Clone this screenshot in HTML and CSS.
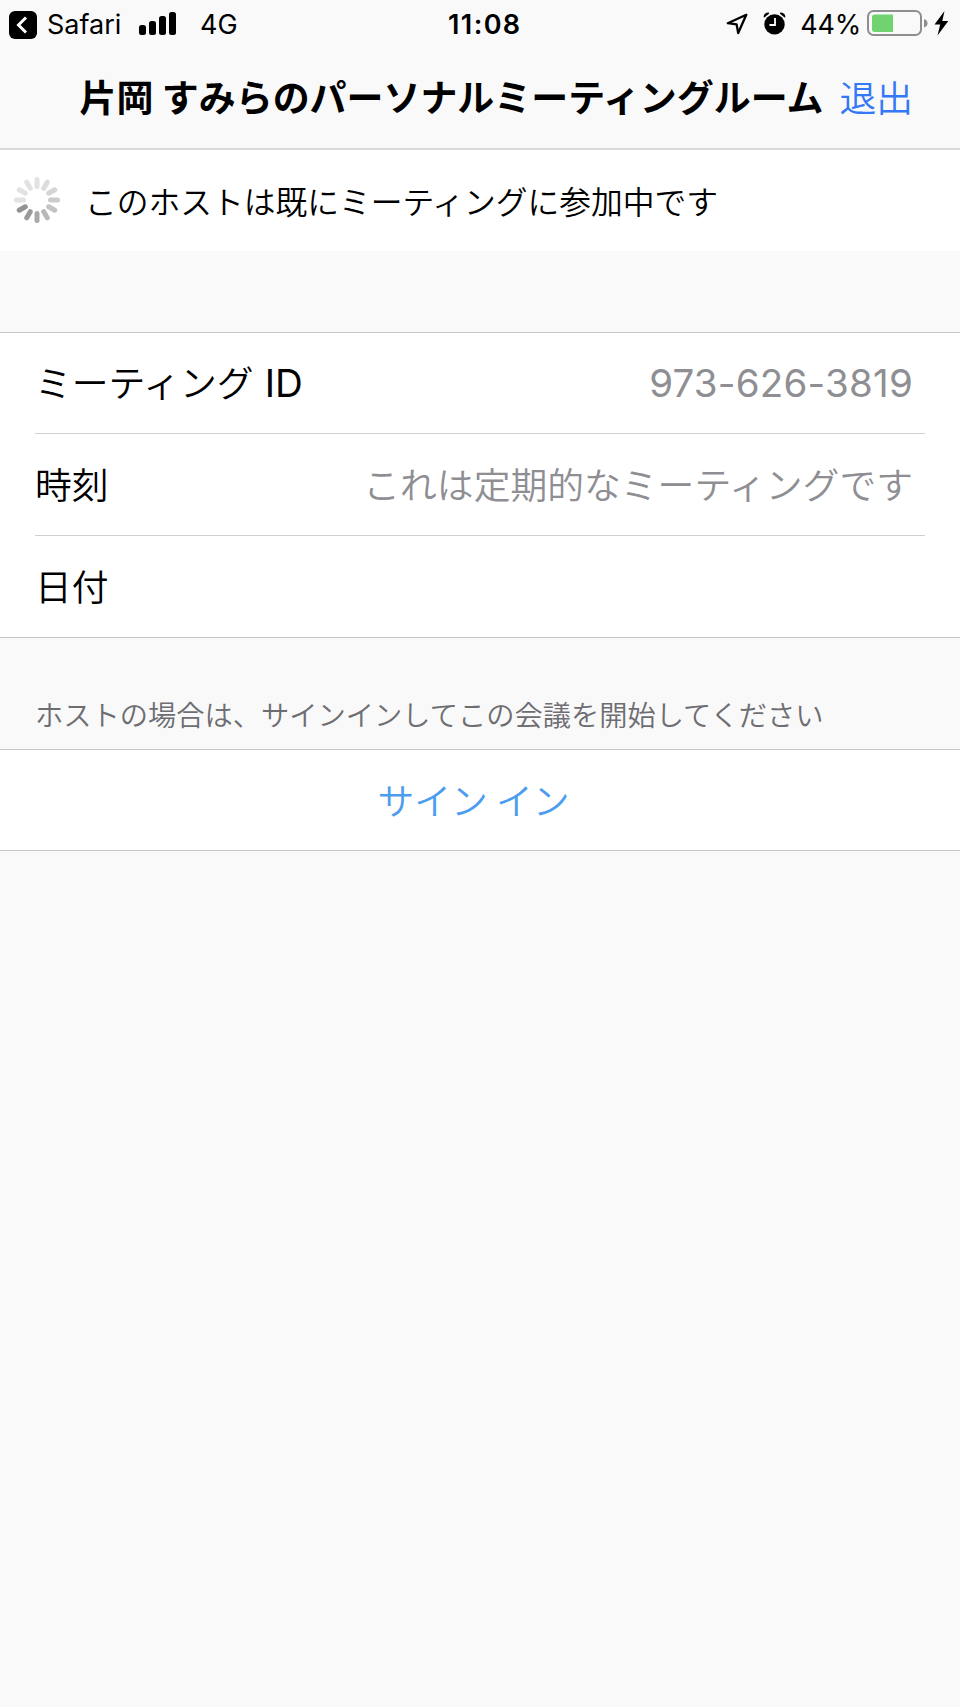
FILE: index.html
```html
<!DOCTYPE html>
<html lang="ja">
<head>
  <meta charset="UTF-8" />
  <meta name="viewport" content="width=device-width, initial-scale=1" />
  <title>片岡 すみらのパーソナルミーティングルーム</title>
  <link rel="stylesheet" href="styles.css">
</head>
<body>

  <header class="top">
    <div class="status-bar">
      <div class="status-left">
        <svg class="back-icon" width="28" height="28" viewBox="0 0 28 28">
          <rect width="28" height="28" rx="6" />
          <path d="M17 6.5L9.5 14L17 21.5" fill="none" stroke="#fff" stroke-width="3" />
        </svg>
        <span class="back-app">Safari</span>
        <svg class="signal-icon" width="38" height="23" viewBox="0 0 38 23">
          <rect x="0" y="13" width="7" height="10" rx="2.5" />
          <rect x="10" y="9" width="7" height="14" rx="2.5" />
          <rect x="20" y="4" width="7" height="19" rx="2.5" />
          <rect x="30" y="0" width="7" height="23" rx="2.5" />
        </svg>
        <span class="network">4G</span>
      </div>
      <span class="clock">11:08</span>
      <div class="status-right">
        <svg class="location-icon" width="22" height="22" viewBox="0 0 22 22">
          <path d="M20.3 1.8L1.8 10.2L10.6 11.4L12.2 20Z" fill="none" stroke="#000" stroke-width="2.3" stroke-linejoin="round" />
        </svg>
        <svg class="alarm-icon" width="23" height="23" viewBox="0 0 23 23">
          <circle cx="11.5" cy="12.4" r="10.2" />
          <path d="M0.6 5.2Q0.8 0.6 5.8 0.6L6.2 1.6L1.4 5.6Z M22.4 5.2Q22.2 0.6 17.2 0.6L16.8 1.6L21.6 5.6Z" />
          <path d="M12 6V13H6.5" fill="none" stroke="#fff" stroke-width="1.8" />
        </svg>
        <span class="battery-level">44%</span>
        <svg class="battery-icon" width="61" height="26" viewBox="0 0 61 26">
          <rect x="1" y="1" width="53" height="24" rx="5.5" fill="none" stroke="#8e8e8e" stroke-width="2" />
          <path d="M7.5 4.5H26V22H7.5Q5 22 5 19.5V7Q5 4.5 7.5 4.5Z" fill="#71d270" />
          <path d="M57 9Q60.5 10 60.5 13.2T57 17.5Z" fill="#8e8e8e" />
        </svg>
        <svg class="bolt-icon" width="15" height="25" viewBox="0 0 15 25">
          <path d="M10.5 0L0.5 13.5H6.2L3.5 24.5L14.3 10H8.3Z" />
        </svg>
      </div>
    </div>
    <div class="nav-bar">
      <h1 class="nav-title">片岡 すみらのパーソナルミーティングルーム</h1>
      <a class="leave">退出</a>
    </div>
  </header>

  <div class="notice">
    <svg class="spinner" width="48" height="48" viewBox="-24 -24 48 48" stroke-width="5" stroke-linecap="round">
      <path d="M0 -13.5V-20.5" stroke="#e2e2e2" />
      <path d="M0 -13.5V-20.5" stroke="#dcdcdc" transform="rotate(30)" />
      <path d="M0 -13.5V-20.5" stroke="#d5d5d5" transform="rotate(60)" />
      <path d="M0 -13.5V-20.5" stroke="#cbcbcb" transform="rotate(90)" />
      <path d="M0 -13.5V-20.5" stroke="#c3c3c3" transform="rotate(120)" />
      <path d="M0 -13.5V-20.5" stroke="#b8b8b8" transform="rotate(150)" />
      <path d="M0 -13.5V-20.5" stroke="#a9a9a9" transform="rotate(180)" />
      <path d="M0 -13.5V-20.5" stroke="#9b9b9b" transform="rotate(210)" />
      <path d="M0 -13.5V-20.5" stroke="#949494" transform="rotate(240)" />
      <path d="M0 -13.5V-20.5" stroke="#e2e2e2" transform="rotate(270)" />
      <path d="M0 -13.5V-20.5" stroke="#e2e2e2" transform="rotate(300)" />
      <path d="M0 -13.5V-20.5" stroke="#e2e2e2" transform="rotate(330)" />
    </svg>
    <span class="notice-text">このホストは既にミーティングに参加中です</span>
  </div>

  <div class="info-list">
    <div class="info-row">
      <span>ミーティング <span class="latin">ID</span></span>
      <span class="info-value number">973-626-3819</span>
    </div>
    <div class="info-row">
      <span>時刻</span>
      <span class="info-value">これは定期的なミーティングです</span>
    </div>
    <div class="info-row">
      <span>日付</span>
    </div>
  </div>

  <p class="hint">ホストの場合は、サインインしてこの会議を開始してください</p>
  <a class="sign-in">サイン イン</a>

</body>
</html>
```

FILE: styles.css
```css
* {
  box-sizing: border-box;
}
body {
  margin: 0;
  min-height: 100vh;
  background: #f9f9f9;
  color: #000;
  font-family: "Noto Sans CJK JP", sans-serif;
  font-weight: 350;
  font-size: 36.8px;
}
svg {
  display: block;
  flex: none;
}

/* Header */
.top {
  height: 150px;
  border-bottom: 2px solid #d9d9d9;
}
.status-bar {
  display: flex;
  align-items: center;
  height: 50px;
  padding: 0 11px 0 9px;
  font-family: Inter, sans-serif;
  font-size: 27px;
  font-weight: 400;
  line-height: 50px;
}
.status-left {
  display: flex;
  align-items: center;
  width: 439px;
}
.back-app {
  margin-left: 10px;
  width: 82px;
}
.signal-icon {
  margin: 0 23px 3px 10px;
}
.clock {
  font-weight: 600;
  letter-spacing: 1.4px;
}
.status-right {
  display: flex;
  align-items: center;
  margin-left: auto;
}
.location-icon {
  margin: 0 15px 3px 0;
}
.alarm-icon {
  margin: 0 14px 4px 0;
}
.battery-level {
  margin-right: 6px;
  letter-spacing: -0.2px;
}
.battery-icon {
  margin: 0 6px 4px 0;
}
.bolt-icon {
  margin-bottom: 3px;
}
.nav-bar {
  display: flex;
  justify-content: flex-end;
  height: 98px;
  padding-right: 47px;
  line-height: 92px;
}
.nav-title {
  margin: 0 16px 0 0;
  font-size: 36.95px;
  font-weight: 700;
  white-space: nowrap;
}
.leave {
  color: #3478f6;
}

/* Waiting message */
.notice {
  display: flex;
  align-items: center;
  height: 101px;
  padding: 0 0 2px 13px;
  background: #fff;
}
.notice-text {
  margin-left: 24px;
  font-size: 31.75px;
}

/* Meeting details */
.info-list {
  margin-top: 81px;
  padding: 0 35px;
  background: #fff;
  border-top: 1px solid #c8c7cc;
  border-bottom: 1px solid #c8c7cc;
}
.info-row {
  display: flex;
  justify-content: space-between;
  height: 100px;
  padding-right: 12px;
  line-height: 97px;
}
.info-row + .info-row {
  height: 102px;
  border-top: 1px solid #d0d0d2;
  line-height: 99px;
}
.info-value {
  color: #8e8e93;
}
.latin,
.number {
  font-family: Inter, sans-serif;
  font-weight: 400;
  font-size: 38.5px;
}
.latin {
  margin-left: 3px;
}
.number {
  line-height: 101px;
  letter-spacing: 0.2px;
}

/* Sign in */
.hint {
  margin: 0;
  height: 111px;
  padding: 51px 0 0 35px;
  color: #6d6d72;
  font-size: 28.25px;
  line-height: 50px;
}
.sign-in {
  display: block;
  height: 102px;
  padding-right: 13px;
  background: #fff;
  border-top: 1px solid #c8c7cc;
  border-bottom: 1px solid #c8c7cc;
  color: #4c9df0;
  line-height: 98px;
  text-align: center;
}
```
